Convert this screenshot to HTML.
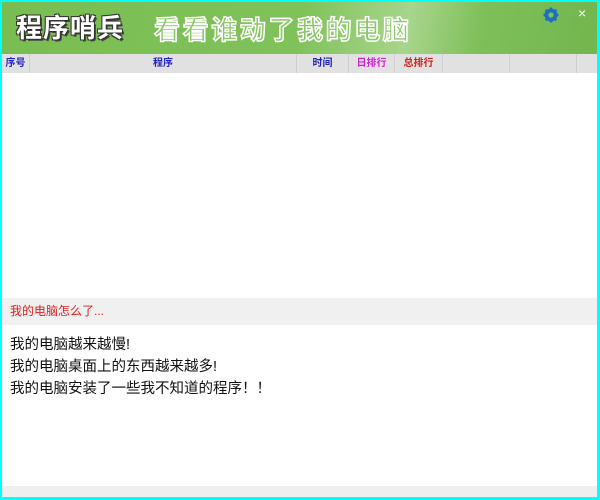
<!DOCTYPE html>
<html><head><meta charset="utf-8"><style>
*{margin:0;padding:0;box-sizing:border-box}
body{width:600px;height:500px;background:#0ff;position:relative;overflow:hidden;font-family:"Liberation Sans","Noto Sans CJK SC",sans-serif}
#win{position:absolute;left:2px;top:2px;width:595px;height:495px;background:#fff}
#hd{position:absolute;left:0;top:0;width:595px;height:52px;background:linear-gradient(100deg,#79bd52 0%,#80c25a 50%,#a8d58c 68%,#7fbf5a 80%,#72b64e 100%)}
.t1{position:absolute;left:14px;top:6px;font-size:26px;font-weight:bold;color:#fff;letter-spacing:1px;text-shadow:-1px -1px 0 #333,1px -1px 0 #333,-1px 1px 0 #333,1px 1px 0 #333,2px 2px 0 #444}
.t2{position:absolute;left:152px;top:8px;font-size:26px;font-weight:bold;color:#8cc76a;letter-spacing:2.6px;-webkit-text-stroke:1.5px #fff}
#th{position:absolute;left:0;top:52px;width:595px;height:19px;background:#e1e1e1;font-size:10px;font-weight:bold}
#th div{position:absolute;top:0;height:19px;line-height:19px;text-align:center;border-right:1px solid #cfcfcf}
#q{position:absolute;left:0;top:296px;width:595px;height:27px;background:#f0f0f0;color:#e02020;font-size:12px;line-height:27px;padding-left:8px}
#txt{position:absolute;left:8px;top:332px;font-size:14.5px;line-height:22px;color:#111}
#bt{position:absolute;left:0;top:484px;width:595px;height:11px;background:#efefef}
</style></head><body><div id="win">
<div id="hd"><div class="t1">程序哨兵</div><div class="t2">看看谁动了我的电脑</div>
<svg style="position:absolute;left:541px;top:5px" width="16" height="16" viewBox="0 0 16 16"><circle cx="8" cy="8" r="5" fill="none" stroke="#1f6fbf" stroke-width="3"/><g stroke="#1f6fbf" stroke-width="2.5"><line x1="8" y1="0.5" x2="8" y2="15.5"/><line x1="0.5" y1="8" x2="15.5" y2="8"/><line x1="2.7" y1="2.7" x2="13.3" y2="13.3"/><line x1="13.3" y1="2.7" x2="2.7" y2="13.3"/></g><circle cx="8" cy="8" r="2.6" fill="#7fbf5a"/></svg>
<div style="position:absolute;left:576px;top:3px;color:#fff;font-size:14px">×</div></div>
<div id="th">
<div style="left:0;width:28px;color:#2020c0">序号</div>
<div style="left:28px;width:267px;color:#2020c0">程序</div>
<div style="left:295px;width:52px;color:#2020c0">时间</div>
<div style="left:347px;width:46px;color:#d020d0">日排行</div>
<div style="left:393px;width:48px;color:#d02020">总排行</div>
<div style="left:441px;width:67px"></div>
<div style="left:508px;width:67px"></div>
</div>
<div id="q">我的电脑怎么了...</div>
<div id="txt">我的电脑越来越慢!<br>我的电脑桌面上的东西越来越多!<br>我的电脑安装了一些我不知道的程序！！</div>
<div id="bt"></div>
</div></body></html>
